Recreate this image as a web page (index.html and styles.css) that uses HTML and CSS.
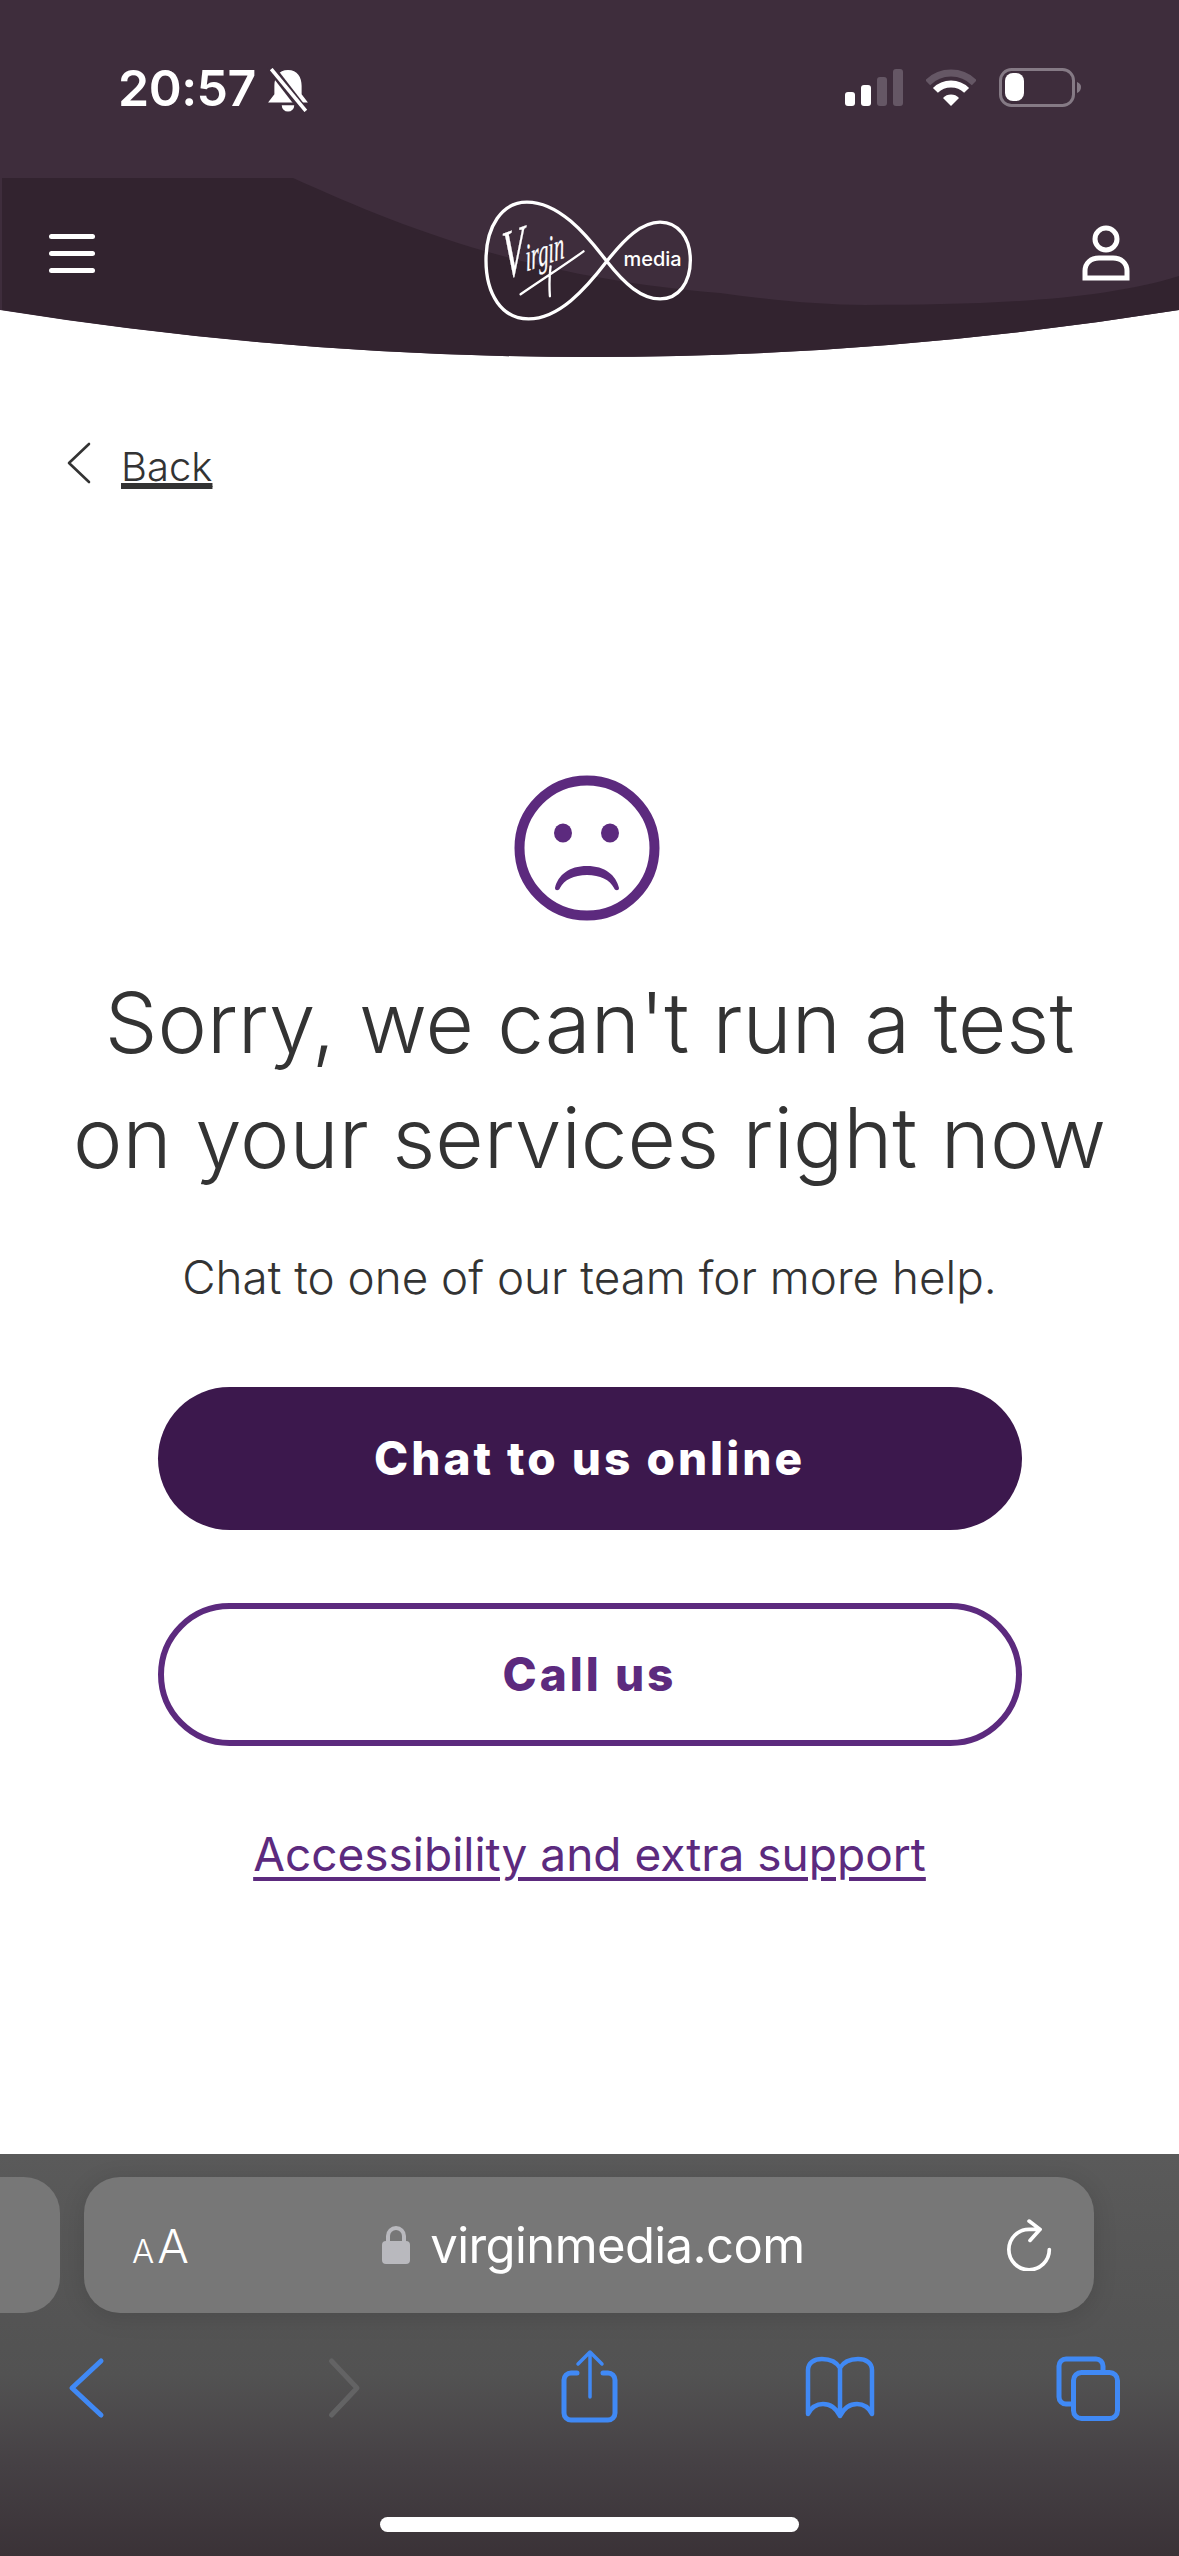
FILE: index.html
```html
<!DOCTYPE html>
<html lang="en">
<head>
    <meta charset="UTF-8">
    <meta name="viewport" content="width=device-width, initial-scale=1.0">
    <title>Virgin Media</title>
    <link rel="stylesheet" href="styles.css">
</head>
<body>
    <!-- iOS status bar -->
    <div class="status-bar">
        <div class="status-left">
            <span class="status-time">20:57</span>
            <svg class="bell" viewBox="0 0 40 42">
                <path fill="#fff" d="M20 2C11 2 7 9 7 17v8l-6 8h38l-6-8v-8C33 9 29 2 20 2z"/>
                <path fill="#fff" d="M14 35.500a6 6 0 0 0 12 0z"/>
                <path stroke="#3e2d3c" stroke-width="8" d="M3 -1l34 44"/>
                <path stroke="#fff" stroke-width="3.4" d="M4 1l33 40"/>
            </svg>
        </div>
        <div class="status-right">
            <svg class="signal" viewBox="0 0 58 37">
                <rect x="0" y="23" width="10" height="14" rx="3" fill="#fff"/>
                <rect x="16" y="16" width="10" height="21" rx="3" fill="#fff"/>
                <rect x="32" y="8" width="10" height="29" rx="3" fill="#655765"/>
                <rect x="48" y="0" width="10" height="37" rx="3" fill="#655765"/>
            </svg>
            <svg class="wifi" viewBox="0 0 50 38">
                <path fill="none" stroke="#655765" stroke-width="7" d="M1.7 13.7a33 33 0 0 1 46.6 0"/>
                <path fill="none" stroke="#fff" stroke-width="7" d="M9.4 21.4a22 22 0 0 1 31.2 0"/>
                <path fill="#fff" d="M25 37l-8-8a11 11 0 0 1 16 0z"/>
            </svg>
            <svg class="battery" viewBox="0 0 82 39">
                <rect x="1.5" y="1.5" width="73" height="36" rx="11" fill="none" stroke="#857a85" stroke-width="3"/>
                <rect x="6" y="5" width="19" height="28" rx="8" fill="#fff"/>
                <path fill="#857a85" d="M78 14c3 1 4 3 4 5s-1 5-4 6z"/>
            </svg>
        </div>
    </div>

    <!-- Site header -->
    <header class="site-header">
        <svg class="header-bg" viewBox="0 0 1179 184">
            <path fill="#3e2d3c" d="M0 0H1179V134Q590 228 0 134Z"/>
            <path fill="#32232f" d="M2 2H293C400 50 520 100 720 117C770 124 820 129 865 129C980 129 1100 125 1179 100V134Q590 228 2 134Z"/>
        </svg>
        <div class="menu-icon"><span></span><span></span><span></span></div>
        <svg class="logo" viewBox="130 85 640 375">
            <path fill="none" stroke="#fff" stroke-width="10" d="M505 275C440 190 360 97 265 97C190 97 142 170 142 272C142 375 190 448 270 448C360 448 440 360 505 275C560 205 610 157 665 157C720 157 756 205 756 272C756 340 720 388 665 388C610 388 560 345 505 275Z"/>
            <text class="logo-virgin" transform="translate(196 330) rotate(-20) skewX(-16) scale(.58 1)"><tspan class="logo-v">V</tspan>irgin</text>
            <path fill="none" stroke="#fff" stroke-width="7" stroke-linecap="round" d="M246 374C310 330 380 285 435 245M336 290C332 320 332 350 334 380"/>
            <text class="logo-media" x="555" y="288">media</text>
        </svg>
        <svg class="profile-icon" viewBox="0 0 48 56">
            <circle cx="24" cy="14" r="11" fill="none" stroke="#fff" stroke-width="5"/>
            <path fill="none" stroke="#fff" stroke-width="5" d="M3 53V46C3 38 9 33 17 33H31C39 33 45 38 45 46V53Z"/>
        </svg>
    </header>

    <main class="content">
        <a class="back-link" href="#">
            <svg class="back-chevron" viewBox="0 0 24 42">
                <path fill="none" stroke="#333" stroke-width="2.6" stroke-linecap="round" stroke-linejoin="round" d="M22 2L2 21L22 40"/>
            </svg>
            <span>Back</span>
        </a>

        <div class="message">
            <svg class="sad-face" viewBox="0 0 146 146">
                <circle cx="73" cy="73" r="67.500" fill="none" stroke="#5c2a7e" stroke-width="10"/>
                <ellipse cx="49" cy="58" rx="9" ry="9.5" fill="#5c2a7e"/>
                <ellipse cx="96" cy="58" rx="9" ry="9.5" fill="#5c2a7e"/>
                <path fill="#5c2a7e" d="M41 113C44 100 55 91 73 91C91 91 102 100 105 113C105 116 101 116 100 113C96 105 86 100 73 100C60 100 50 105 46 113C45 116 41 116 41 113Z"/>
            </svg>
            <h1>Sorry, we can't run a test<br>on your services right now</h1>
            <p class="lead">Chat to one of our team for more help.</p>
            <a class="btn btn-primary" href="#">Chat to us online</a>
            <a class="btn btn-outline" href="#">Call us</a>
            <a class="support-link" href="#">Accessibility and extra support</a>
        </div>
    </main>

    <!-- Safari toolbar -->
    <div class="safari-bar">
        <div class="tab-row">
            <div class="tab-prev"></div>
            <div class="url-pill">
                <span class="text-size"><small>A</small>A</span>
                <span class="url">
                    <svg class="lock" viewBox="0 0 28 38">
                        <path fill="none" stroke="#b9b9be" stroke-width="4" d="M6 18V10a8 8 0 0 1 16 0v8"/>
                        <rect x="0" y="15" width="28" height="23" rx="4" fill="#b9b9be"/>
                    </svg>
                    virginmedia.com
                </span>
                <svg class="reload" viewBox="0 0 50 56">
                    <path fill="none" stroke="#fff" stroke-width="4" stroke-linecap="round" stroke-linejoin="round" d="M46 33A22 22 0 1 1 24 11H36M24 2L36 11L25 23"/>
                </svg>
            </div>
        </div>
        <div class="nav-row">
            <svg class="nav-icon" viewBox="0 0 80 80">
                <path class="nav-line" d="M55 15L26 42L55 69"/>
            </svg>
            <svg class="nav-icon nav-off" viewBox="0 0 80 80">
                <path class="nav-line" d="M34.500 15L60 42L34.500 69"/>
            </svg>
            <svg class="nav-icon" viewBox="0 0 80 80">
                <path class="nav-line" d="M30 27H24a7 7 0 0 0-7 7V67a7 7 0 0 0 7 7H61a7 7 0 0 0 7-7V34a7 7 0 0 0-7-7H56"/>
                <path class="nav-line nav-thin" d="M43 51V7M31 18L43 6L55 18"/>
            </svg>
            <svg class="nav-icon" viewBox="0 0 80 80">
                <path class="nav-line nav-mid" d="M42 22C38 15 30 13 24 13C16 13 10 17 10 24V68C14 60 20 58 25 58C32 58 38 62 42 70C46 62 52 58 59 58C64 58 70 60 74 68V24C74 17 68 13 60 13C54 13 46 15 42 22ZM42 22V70"/>
            </svg>
            <svg class="nav-icon" viewBox="0 0 80 80">
                <path class="nav-line" d="M55 24V20a7 7 0 0 0-7-7H18a7 7 0 0 0-7 7V51a7 7 0 0 0 7 7H23"/>
                <rect class="nav-line" x="25.500" y="26.500" width="44" height="46" rx="8"/>
            </svg>
        </div>
        <div class="home-indicator"></div>
    </div>
</body>
</html>
```

FILE: styles.css
```css
* {
    box-sizing: border-box;
}
body {
    margin: 0;
    width: 1179px;
    height: 2556px;
    overflow: hidden;
    display: flex;
    flex-direction: column;
    background: white;
    font-family: Inter, "Noto Sans", sans-serif;
    color: #333;
}
a {
    color: inherit;
}

/* status bar */
.status-bar {
    height: 176px;
    flex-shrink: 0;
    background: #3e2d3c;
    display: flex;
    justify-content: space-between;
    padding: 68px 98px 0 118px;
}
.status-left {
    display: flex;
    align-items: flex-start;
    gap: 11px;
}
.status-time {
    font-family: Inter, sans-serif;
    font-weight: 600;
    font-size: 50px;
    line-height: 40px;
    color: white;
    letter-spacing: -0.5px;
}
.bell {
    width: 42px;
    height: 44px;
}
.status-right {
    display: flex;
    align-items: flex-start;
    gap: 23px;
}
.signal {
    width: 58px;
    height: 37px;
    margin-top: 1px;
}
.wifi {
    width: 50px;
    height: 38px;
    margin-top: 1px;
}
.battery {
    width: 82px;
    height: 39px;
}

/* header */
.site-header {
    position: relative;
    height: 184px;
    flex-shrink: 0;
    display: flex;
    justify-content: space-between;
    align-items: flex-start;
    padding: 22px 49px 0;
}
.header-bg {
    position: absolute;
    top: 0;
    left: 0;
    width: 1179px;
    height: 184px;
}
.menu-icon {
    position: relative;
    width: 46px;
    margin-top: 36px;
    display: flex;
    flex-direction: column;
    gap: 12px;
}
.menu-icon span {
    height: 5px;
    border-radius: 3px;
    background: white;
}
.logo {
    position: relative;
    width: 213px;
    height: 125px;
}
.logo-virgin {
    font-family: "Liberation Serif", serif;
    font-style: italic;
    font-size: 112px;
    fill: white;
    stroke: white;
    stroke-width: 1px;
}
.logo-v {
    font-size: 200px;
}
.logo-media {
    font-family: Inter, sans-serif;
    font-weight: 500;
    font-size: 60px;
    fill: white;
}
.profile-icon {
    position: relative;
    width: 48px;
    height: 56px;
    margin-top: 27px;
}

/* content */
.content {
    flex: 1;
    display: flex;
    flex-direction: column;
}
.back-link {
    display: flex;
    align-items: flex-start;
    gap: 30px;
    margin: 82px 0 0 67px;
    font-size: 40px;
    line-height: 50px;
}
.back-link span {
    text-decoration: underline;
    text-decoration-thickness: 3px;
    text-underline-offset: 5px;
    font-weight: 300;
}
.back-chevron {
    width: 24px;
    height: 42px;
}
.message {
    display: flex;
    flex-direction: column;
    align-items: center;
    margin-top: 283px;
}
.sad-face {
    width: 146px;
    height: 146px;
    margin-left: -5px;
}
h1 {
    margin: 44px 0 0;
    font-size: 83.5px;
    line-height: 115px;
    font-weight: 300;
    text-align: center;
    white-space: nowrap;
}
.lead {
    margin: 53px 0 0;
    font-size: 45.8px;
    line-height: 60px;
    font-weight: 300;
}
.btn {
    width: 864px;
    height: 143px;
    margin-top: 79px;
    padding-bottom: 2px;
    border-radius: 72px;
    display: flex;
    align-items: center;
    justify-content: center;
    font-size: 46px;
    font-weight: 800;
    letter-spacing: 3px;
    text-decoration: none;
}
.btn-primary {
    background: #3c184d;
    color: white;
}
.btn-outline {
    margin-top: 73px;
    border: 6px solid #5c2a7e;
    color: #5c2a7e;
}
.support-link {
    margin-top: 78px;
    font-size: 46px;
    line-height: 60px;
    color: #5c2a7e;
    text-underline-offset: 6px;
}

/* safari toolbar */
.safari-bar {
    height: 402px;
    flex-shrink: 0;
    background: linear-gradient(#5a5a5a 0%, #525252 55%, #454044 78%, #3a3237 100%);
    display: flex;
    flex-direction: column;
}
.tab-row {
    display: flex;
    gap: 24px;
    margin-top: 23px;
}
.tab-prev {
    width: 60px;
    height: 136px;
    background: #777;
    border-radius: 0 36px 36px 0;
}
.url-pill {
    width: 1010px;
    height: 136px;
    background: #777;
    border-radius: 36px;
    box-shadow: 0 4px 24px rgba(0, 0, 0, 0.12);
    display: flex;
    align-items: center;
    justify-content: space-between;
    padding: 0 41px 0 48px;
    color: white;
}
.text-size {
    font-family: Inter, sans-serif;
    font-size: 47px;
    font-weight: 300;
    letter-spacing: 3px;
}
.text-size small {
    font-size: 33px;
}
.url {
    display: flex;
    align-items: center;
    gap: 20px;
    margin-right: 12px;
    font-family: Inter, sans-serif;
    font-size: 49px;
    letter-spacing: -0.6px;
}
.lock {
    width: 28px;
    height: 38px;
}
.reload {
    width: 46px;
    height: 52px;
}
.nav-row {
    display: flex;
    justify-content: space-between;
    padding: 0 51px 0 46px;
    margin-top: 33px;
}
.nav-icon {
    width: 80px;
    height: 80px;
}
.nav-line {
    fill: none;
    stroke: #4089f5;
    stroke-width: 5;
    stroke-linecap: round;
    stroke-linejoin: round;
}
.nav-thin {
    stroke-width: 3.5;
}
.nav-mid {
    stroke-width: 4.5;
}
.nav-off .nav-line {
    stroke: #636364;
}
.home-indicator {
    width: 419px;
    height: 15px;
    margin: 91px auto 0;
    border-radius: 8px;
    background: white;
}
```
